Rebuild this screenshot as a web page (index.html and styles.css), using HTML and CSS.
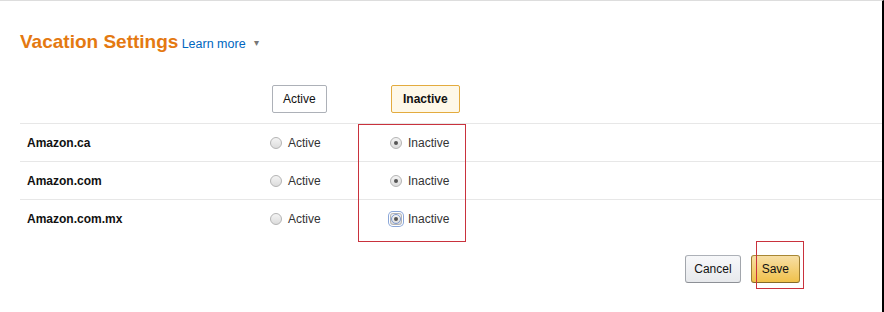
FILE: index.html
```html
<!DOCTYPE html>
<html lang="en">
<head>
  <meta charset="UTF-8">
  <title>Vacation Settings</title>
  <link rel="stylesheet" href="styles.css">
</head>
<body>
  <div class="page">
    <h1 class="title">Vacation Settings <a class="learn" href="#">Learn more</a> <span class="caret">&#9662;</span></h1>

    <div class="settings">
      <div class="head">
        <div></div>
        <div><button class="pill">Active</button></div>
        <div><button class="pill on">Inactive</button></div>
      </div>
      <div class="row">
        <div class="market">Amazon.ca</div>
        <label class="opt"><span class="radio"></span>Active</label>
        <label class="opt"><span class="radio checked"></span>Inactive</label>
      </div>
      <div class="row">
        <div class="market">Amazon.com</div>
        <label class="opt"><span class="radio"></span>Active</label>
        <label class="opt"><span class="radio checked"></span>Inactive</label>
      </div>
      <div class="row">
        <div class="market">Amazon.com.mx</div>
        <label class="opt"><span class="radio"></span>Active</label>
        <label class="opt"><span class="radio checked focus"></span>Inactive</label>
      </div>
      <div class="mark mark-col"></div>
    </div>

    <div class="actions">
      <button class="btn">Cancel</button>
      <button class="btn primary">Save<span class="mark mark-save"></span></button>
    </div>
  </div>
</body>
</html>
```

FILE: styles.css
```css
* { box-sizing: border-box; }
body { margin: 0; font-family: "Liberation Sans", Arial, sans-serif; color: #111; background: #fff; }
.page { min-height: 100vh; border-top: 1px solid #ddd; border-right: 2px solid #000; }

.title { margin: 30px 0 0 20px; font-size: 19px; line-height: 22px; font-weight: bold; color: #e47911; }
.learn { font-size: 12.5px; font-weight: normal; color: #0066c0; text-decoration: none; margin-left: -2px; }
.caret { font-size: 10px; font-weight: normal; color: #777; margin-left: 3px; vertical-align: 2px; }

.settings { position: relative; margin: 30px 0 0 20px; }
.head, .row { display: grid; grid-template-columns: 250px 120px 1fr; align-items: center; }
.head { padding-bottom: 10px; }
.row { height: 38px; border-top: 1px solid #e7e7e7; }
.row:last-of-type { height: 39px; border-bottom: 1px solid #e7e7e7; }

.pill { height: 28px; padding: 0 10px; margin-left: 2px; font: 12px "Liberation Sans", Arial, sans-serif; color: #111; background: #fff; border: 1px solid #adb1b8; border-radius: 2px; }
.pill.on { margin-left: 1px; padding: 0 11px; font-weight: bold; background: #fef8e8; border-color: #e3ab3e; }

.market { padding-left: 7px; font-size: 12px; font-weight: bold; }
.opt { display: flex; align-items: center; gap: 6px; font-size: 12px; color: #333; }
.radio { position: relative; width: 12px; height: 12px; border-radius: 50%; border: 1px solid #b4b4b4; background: linear-gradient(#f4f4f4, #dcdcdc); }
.radio.checked::after { content: ""; position: absolute; left: 3px; top: 3px; width: 4px; height: 4px; border-radius: 50%; background: #555; }
.radio.focus { box-shadow: 0 0 0 1px #fff, 0 0 0 2px #8aa6d8; border-radius: 3px; }
.radio.focus::before { content: ""; position: absolute; inset: 0; border-radius: 50%; border: 1px solid #7f9ad0; }

.actions { display: flex; justify-content: flex-end; gap: 10px; margin: 18px 82px 0 0; }
.btn { position: relative; height: 28px; padding: 0 8px; font: 12px "Liberation Sans", Arial, sans-serif; color: #111; border: 1px solid; border-color: #adb1b8 #a2a6ac #8d9096; border-radius: 3px; background: linear-gradient(#f7f8fa, #e7e9ec); }
.btn.primary { padding: 0 10px; border-color: #a88734 #9c7e31 #846a29; background: linear-gradient(#f7dfa5, #f0c14b); }

.mark { position: absolute; border: 1px solid #c9323d; }
.mark-col { left: 338px; top: 39px; width: 108px; height: 118px; }
.mark-save { left: 4px; top: -15px; width: 48px; height: 48px; }
```
